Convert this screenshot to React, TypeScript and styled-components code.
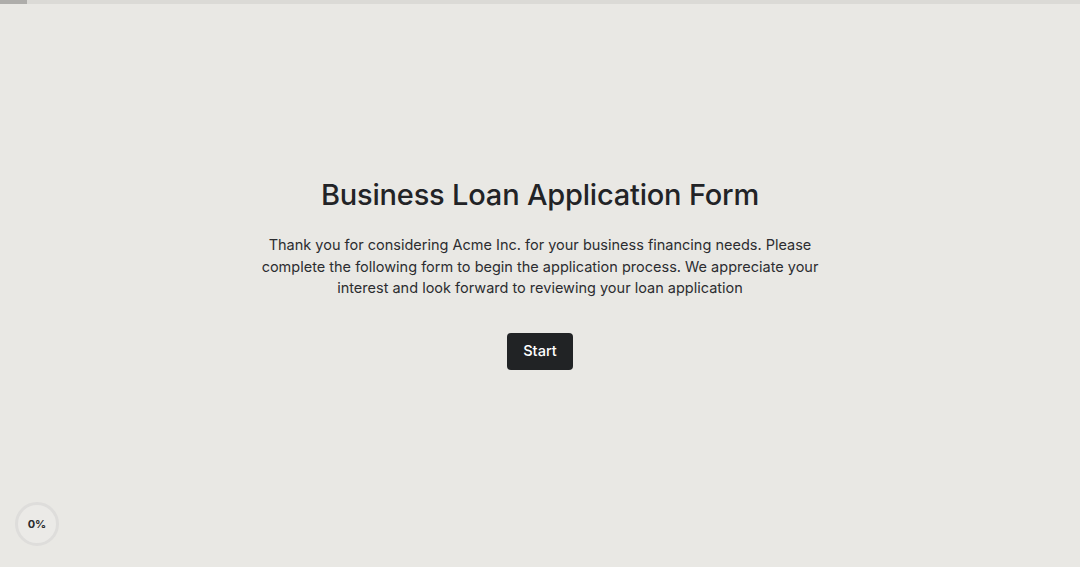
import React from "react";
import styled, { createGlobalStyle } from "styled-components";

const Global = createGlobalStyle`
  html, body { margin: 0; padding: 0; }
  body { background: #e9e8e4; font-family: Inter, "Noto Sans", sans-serif; color: #232427; }
`;

const Page = styled.div`
  position: relative;
  width: 100%;
  height: 567px;
  overflow: hidden;
  background: #e9e8e4;
`;

const ProgressTrack = styled.div`
  height: 4px;
  background: #dbdad6;
  display: flex;
`;

const ProgressFill = styled.div`
  height: 100%;
  background: #aeadaa;
`;

const Main = styled.main`
  display: flex;
  flex-direction: column;
  align-items: center;
  padding-top: 171px;
`;

const Title = styled.h1`
  margin: 0;
  font-size: 29px;
  font-weight: 500;
  line-height: 40px;
  letter-spacing: -0.2px;
  color: #222326;
`;

const Lead = styled.p`
  margin: 19px 0 0;
  width: 580px;
  text-align: center;
  font-size: 14.5px;
  line-height: 21.6px;
  color: #2c2d30;
`;

const StartButton = styled.button`
  margin-top: 34px;
  width: 66px;
  height: 37px;
  border: none;
  border-radius: 4px;
  background: #212325;
  color: #ffffff;
  font-family: Inter, "Noto Sans", sans-serif;
  font-size: 14.6px;
  font-weight: 500;
  cursor: pointer;
`;

const Badge = styled.div`
  position: absolute;
  left: 15px;
  bottom: 21px;
  width: 38px;
  height: 38px;
  border-radius: 50%;
  border: 3px solid #dedddb;
  background: #ebeae7;
  display: flex;
  align-items: center;
  justify-content: center;
  font-size: 11px;
  font-weight: 700;
  color: #2a2b2d;
`;

export default function App() {
  return (
    <Page>
      <Global />
      <ProgressTrack>
        <ProgressFill style={{ width: "27px" }} />
      </ProgressTrack>
      <Main>
        <Title>Business Loan Application Form</Title>
        <Lead>
          Thank you for considering Acme Inc. for your business financing needs. Please
          complete the following form to begin the application process. We appreciate your
          interest and look forward to reviewing your loan application
        </Lead>
        <StartButton>Start</StartButton>
      </Main>
      <Badge>0%</Badge>
    </Page>
  );
}
